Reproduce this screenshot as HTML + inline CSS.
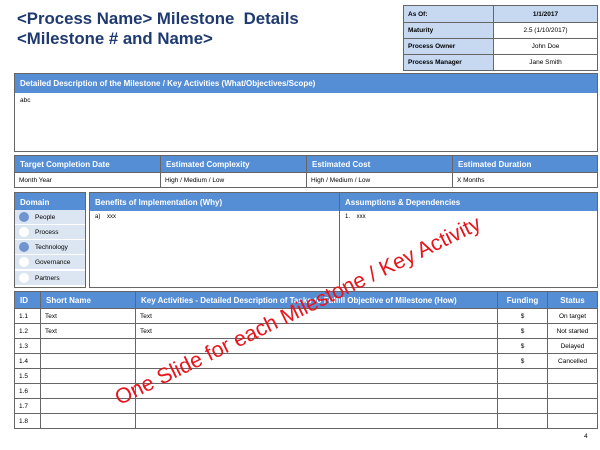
<!DOCTYPE html>
<html><head><style>
*{margin:0;padding:0;box-sizing:border-box}
body{width:600px;height:450px;background:#fff;font-family:"Liberation Sans",sans-serif;position:relative;overflow:hidden}
.a{position:absolute}
.t{color:#1f3a70;font-weight:bold;font-size:16.8px;left:17px;line-height:20px}
.b{border:1px solid #666}
.h{background:#558ed5;color:#fff;font-weight:bold;font-size:8px;padding-left:5px;display:flex;align-items:center}
table{border-collapse:collapse;position:absolute}
td{border:1px solid #666;font-size:6.5px;padding:0 4px}
.dm{position:absolute;left:15px;width:70px;height:14px;background:#dce6f2;font-size:6.5px;padding-left:20px;line-height:15px}
.dm i{position:absolute;left:4px;top:2px;width:10px;height:10px;border-radius:50%;background:#fff}
.dm i.f{background:#7094d0}
</style></head><body>
<div class="a t" style="top:9px">&lt;Process Name&gt; Milestone&nbsp; Details</div>
<div class="a t" style="top:29px">&lt;Milestone # and Name&gt;</div>

<table style="left:403px;top:5px;width:195px">
<tr style="height:17px"><td style="background:#c6d9f1;font-weight:bold;width:90px">As Of:</td><td style="background:#c6d9f1;font-weight:bold;text-align:center">1/1/2017</td></tr>
<tr style="height:16px"><td style="background:#c6d9f1;font-weight:bold">Maturity</td><td style="text-align:center">2.5 (1/10/2017)</td></tr>
<tr style="height:16px"><td style="background:#c6d9f1;font-weight:bold">Process Owner</td><td style="text-align:center">John Doe</td></tr>
<tr style="height:16px"><td style="background:#c6d9f1;font-weight:bold">Process Manager</td><td style="text-align:center">Jane Smith</td></tr>
</table>

<div class="a b" style="left:14px;top:73px;width:584px;height:79px">
<div class="h" style="height:19px">Detailed Description of the Milestone / Key Activities (What/Objectives/Scope)</div>
<div style="font-size:6.5px;padding:4px 5px">abc</div></div>

<table style="left:14px;top:155px;width:584px">
<tr style="height:17px"><td class="h" style="display:table-cell;width:146px">Target Completion Date</td><td class="h" style="display:table-cell;width:146px">Estimated Complexity</td><td class="h" style="display:table-cell;width:146px">Estimated Cost</td><td class="h" style="display:table-cell">Estimated Duration</td></tr>
<tr style="height:15px"><td>Month Year</td><td>High / Medium / Low</td><td>High / Medium / Low</td><td>X Months</td></tr>
</table>

<div class="a b" style="left:14px;top:192px;width:72px;height:96px">
<div class="h" style="height:18px">Domain</div></div>
<div class="dm" style="top:210px"><i class="f"></i>People</div>
<div class="dm" style="top:225px"><i></i>Process</div>
<div class="dm" style="top:240px"><i class="f"></i>Technology</div>
<div class="dm" style="top:255px"><i></i>Governance</div>
<div class="dm" style="top:271px"><i></i>Partners</div>

<div class="a b" style="left:89px;top:192px;width:251px;height:96px">
<div class="h" style="height:18px">Benefits of Implementation (Why)</div>
<div style="font-size:6px;padding:3px 5px">a)&nbsp;&nbsp;&nbsp; xxx</div></div>
<div class="a b" style="left:339px;top:192px;width:259px;height:96px">
<div class="h" style="height:18px">Assumptions &amp; Dependencies</div>
<div style="font-size:6px;padding:3px 5px">1.&nbsp;&nbsp;&nbsp; xxx</div></div>

<table style="left:14px;top:291px;width:584px">
<tr style="height:17px"><td class="h" style="display:table-cell;width:26px">ID</td><td class="h" style="display:table-cell;width:95px">Short Name</td><td class="h" style="display:table-cell;width:362px">Key Activities - Detailed Description of Tasks to Fulfill Objective of Milestone (How)</td><td class="h" style="display:table-cell;width:50px;text-align:center;padding:0">Funding</td><td class="h" style="display:table-cell;text-align:center;padding:0">Status</td></tr>
<tr style="height:15px"><td>1.1</td><td>Text</td><td>Text</td><td style="text-align:center">$</td><td style="text-align:center">On target</td></tr>
<tr style="height:15px"><td>1.2</td><td>Text</td><td>Text</td><td style="text-align:center">$</td><td style="text-align:center">Not started</td></tr>
<tr style="height:15px"><td>1.3</td><td></td><td></td><td style="text-align:center">$</td><td style="text-align:center">Delayed</td></tr>
<tr style="height:15px"><td>1.4</td><td></td><td></td><td style="text-align:center">$</td><td style="text-align:center">Cancelled</td></tr>
<tr style="height:15px"><td>1.5</td><td></td><td></td><td></td><td></td></tr>
<tr style="height:15px"><td>1.6</td><td></td><td></td><td></td><td></td></tr>
<tr style="height:15px"><td>1.7</td><td></td><td></td><td></td><td></td></tr>
<tr style="height:15px"><td>1.8</td><td></td><td></td><td></td><td></td></tr>
</table>

<div class="a" style="left:298px;top:311px;transform:translate(-50%,-50%) rotate(-26deg);color:#e8141c;font-size:21.5px;white-space:nowrap">One Slide for each Milestone / Key Activity</div>
<div class="a" style="left:584px;top:433px;font-size:6.5px">4</div>
</body></html>
